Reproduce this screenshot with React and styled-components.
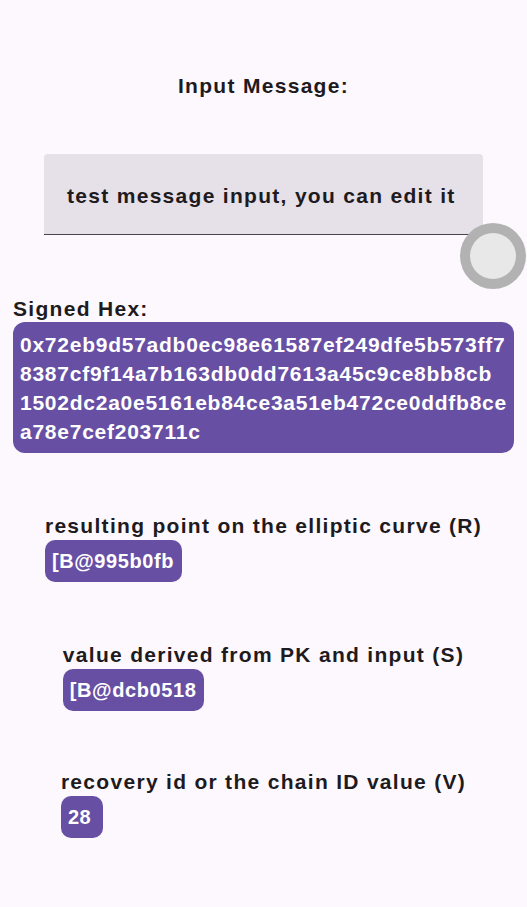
import styled, { createGlobalStyle } from "styled-components";

const GlobalStyle = createGlobalStyle`
  html, body {
    margin: 0;
    padding: 0;
    background: #fdf8fd;
  }
  body {
    font-family: "Liberation Sans", Arial, sans-serif;
    font-weight: 700;
    color: #1d1b20;
  }
`;

const SIGNED_HEX =
  "0x72eb9d57adb0ec98e61587ef249dfe5b573ff78387cf9f14a7b163db0dd7613a45c9ce8bb8cb1502dc2a0e5161eb84ce3a51eb472ce0ddfb8cea78e7cef203711c";

// where the original view wrapped the hex string
const BREAKS = [40, 78, 117];

const Screen = styled.div`
  width: 527px;
  min-height: 907px;
  display: flex;
  flex-direction: column;
  align-items: center;
  padding-top: 72px;
  box-sizing: border-box;
`;

const Title = styled.h1`
  margin: 0;
  font-size: 21px;
  line-height: 28px;
  letter-spacing: 1.3px;
  font-weight: 700;
`;

const InputWrap = styled.div`
  position: relative;
  margin-top: 54px;
  width: 439px;
`;

const InputField = styled.div`
  height: 81px;
  display: flex;
  align-items: center;
  padding: 4px 0 0 23px;
  box-sizing: border-box;
  background: #e6e0e9;
  border-radius: 4px 4px 0 0;
  border-bottom: 1px solid #49454f;
  font-size: 21px;
  letter-spacing: 1.3px;
  white-space: nowrap;
`;

const Handle = styled.div`
  position: absolute;
  right: -43px;
  top: 69px;
  width: 66px;
  height: 66px;
  border-radius: 50%;
  background: #e8e8e8;
  border: 10px solid rgba(160, 160, 160, 0.75);
  box-sizing: border-box;
`;

const HexBlock = styled.section`
  align-self: stretch;
  margin: 61px 13px 0;
  display: flex;
  flex-direction: column;
`;

const HexLabel = styled.div`
  font-size: 21px;
  line-height: 26px;
  letter-spacing: 1.3px;
`;

const HexBox = styled.div`
  background: #6750a4;
  color: #ffffff;
  border-radius: 12px;
  padding: 8px 7px 7px;
  font-size: 21px;
  line-height: 29px;
  letter-spacing: 0.75px;
`;

const HexLine = styled.span`
  display: block;
  white-space: nowrap;
`;

const Field = styled.section`
  display: flex;
  flex-direction: column;
  align-items: flex-start;
  margin-top: ${({ $gap }) => $gap}px;
`;

const FieldLabel = styled.div`
  font-size: 21px;
  line-height: 24px;
  letter-spacing: 1.3px;
  white-space: nowrap;
`;

const Chip = styled.div`
  margin-top: 2px;
  height: 42px;
  min-width: 42px;
  box-sizing: border-box;
  display: flex;
  align-items: center;
  padding: 0 8px 0 7px;
  background: #6750a4;
  color: #ffffff;
  border-radius: 10px;
  font-size: 20px;
  letter-spacing: 0.6px;
`;

function splitHex(hex, breaks) {
  const lines = [];
  let start = 0;
  breaks.forEach((b) => {
    lines.push(hex.slice(start, b));
    start = b;
  });
  lines.push(hex.slice(start));
  return lines;
}

const fields = [
  { label: "resulting point on the elliptic curve (R)", value: "[B@995b0fb", gap: 61 },
  { label: "value derived from PK and input (S)", value: "[B@dcb0518", gap: 61 },
  { label: "recovery id or the chain ID value (V)", value: "28", gap: 59 },
];

export default function App() {
  return (
    <>
      <GlobalStyle />
      <Screen>
        <Title>Input Message:</Title>
        <InputWrap>
          <InputField>test message input, you can edit it</InputField>
          <Handle />
        </InputWrap>
        <HexBlock>
          <HexLabel>Signed Hex:</HexLabel>
          <HexBox>
            {splitHex(SIGNED_HEX, BREAKS).map((line) => (
              <HexLine key={line}>{line}</HexLine>
            ))}
          </HexBox>
        </HexBlock>
        {fields.map((f) => (
          <Field key={f.label} $gap={f.gap}>
            <FieldLabel>{f.label}</FieldLabel>
            <Chip>{f.value}</Chip>
          </Field>
        ))}
      </Screen>
    </>
  );
}
